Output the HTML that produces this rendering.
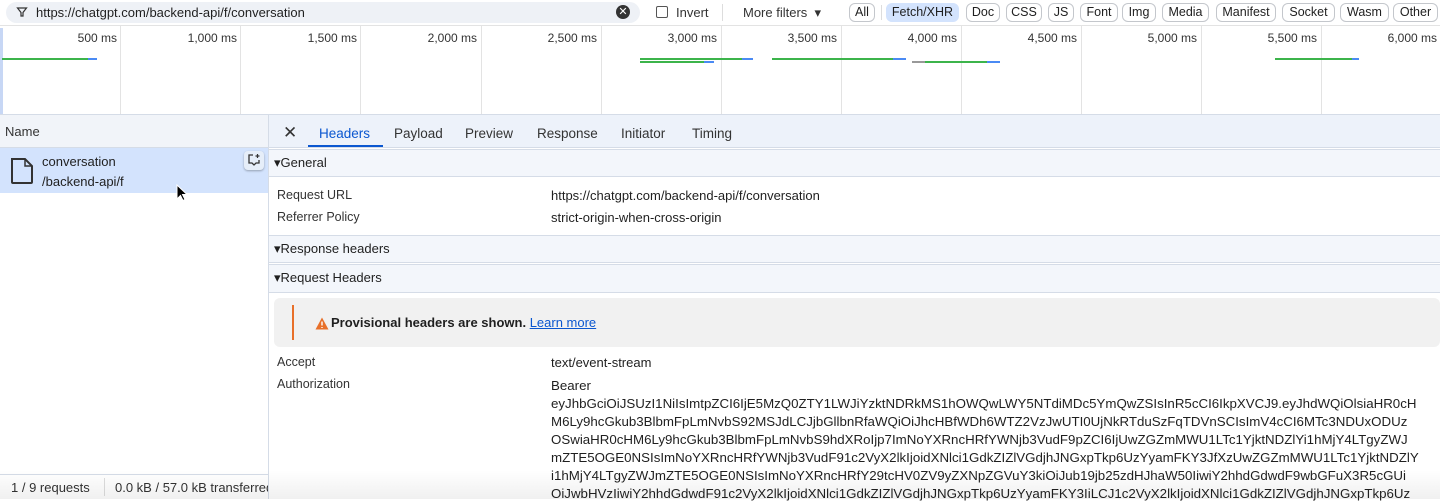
<!DOCTYPE html>
<html><head><meta charset="utf-8"><style>
*{margin:0;padding:0;box-sizing:border-box}
body{width:1440px;height:499px;overflow:hidden;background:#fff;font-family:"Liberation Sans",Arial,sans-serif;color:#1f1f1f;position:relative;font-size:13px}
.a{position:absolute;white-space:nowrap}
.chip{position:absolute;top:3px;height:19px;border:1px solid #c4c7cc;border-radius:6px;font-size:12.5px;line-height:17px;text-align:center;color:#1f1f1f}
.vl{position:absolute;top:26px;width:1px;height:88px;background:#e3e3e3}
.tl{position:absolute;top:31px;font-size:12px;color:#333;text-align:right;width:80px}
.bar{position:absolute;height:2px}
.sec{position:absolute;left:269px;width:1171px;background:#f3f6fb;border-top:1px solid #d5dce7;border-bottom:1px solid #d5dce7;font-size:13px;line-height:26px;padding-left:5px}
.k{position:absolute;left:277px;font-size:12.5px;color:#333}
.v{position:absolute;left:551px;font-size:13px;color:#1f1f1f;white-space:nowrap;overflow:hidden;width:880px}
</style></head><body>
<div class="a" style="left:6px;top:2px;width:634px;height:21px;background:#eef1f6;border-radius:11px"></div>
<svg class="a" style="left:16px;top:6px" width="12" height="12" viewBox="0 0 12 12"><path d="M1.5 2h9L7 6.5V10l-2 0V6.5z" fill="none" stroke="#333" stroke-width="1.2"/></svg>
<div class="a" style="left:36px;top:5px;font-size:13px">https://chatgpt.com/backend-api/f/conversation</div>
<div class="a" style="left:616px;top:5px;width:14px;height:14px;border-radius:7px;background:#333;color:#fff;font-size:11px;line-height:14px;text-align:center">✕</div>
<div class="a" style="left:656px;top:6px;width:12px;height:12px;border:1px solid #555;border-radius:2px"></div>
<div class="a" style="left:676px;top:5px;font-size:13px;color:#333">Invert</div>
<div class="a" style="left:722px;top:4px;width:1px;height:17px;background:#ddd"></div>
<div class="a" style="left:743px;top:5px;font-size:13px;color:#333">More filters &nbsp;▾</div>
<div class="a" style="left:881px;top:5px;width:1px;height:15px;background:#ddd"></div>
<div class="chip" style="left:849px;width:26px">All</div>
<div class="chip" style="left:886px;width:73px;background:#d3e3fd;border-color:#d3e3fd">Fetch/XHR</div>
<div class="chip" style="left:966px;width:34px">Doc</div>
<div class="chip" style="left:1006px;width:36px">CSS</div>
<div class="chip" style="left:1048px;width:26px">JS</div>
<div class="chip" style="left:1080px;width:38px">Font</div>
<div class="chip" style="left:1122px;width:34px">Img</div>
<div class="chip" style="left:1162px;width:47px">Media</div>
<div class="chip" style="left:1216px;width:60px">Manifest</div>
<div class="chip" style="left:1282px;width:53px">Socket</div>
<div class="chip" style="left:1340px;width:49px">Wasm</div>
<div class="chip" style="left:1393px;width:45px">Other</div>
<div class="a" style="left:0;top:25px;width:1440px;height:1px;background:#e3e3e3"></div>
<div class="a" style="left:0;top:28px;width:3px;height:86px;background:#c7d7f5"></div>
<div class="vl" style="left:120px"></div><div class="vl" style="left:240px"></div><div class="vl" style="left:360px"></div><div class="vl" style="left:481px"></div><div class="vl" style="left:601px"></div><div class="vl" style="left:721px"></div><div class="vl" style="left:841px"></div><div class="vl" style="left:961px"></div><div class="vl" style="left:1081px"></div><div class="vl" style="left:1201px"></div><div class="vl" style="left:1321px"></div>
<div class="tl" style="left:37px">500 ms</div><div class="tl" style="left:157px">1,000 ms</div><div class="tl" style="left:277px">1,500 ms</div><div class="tl" style="left:397px">2,000 ms</div><div class="tl" style="left:517px">2,500 ms</div><div class="tl" style="left:637px">3,000 ms</div><div class="tl" style="left:757px">3,500 ms</div><div class="tl" style="left:877px">4,000 ms</div><div class="tl" style="left:997px">4,500 ms</div><div class="tl" style="left:1117px">5,000 ms</div><div class="tl" style="left:1237px">5,500 ms</div><div class="tl" style="left:1357px">6,000 ms</div>
<div class="bar" style="left:2px;top:58px;width:86px;background:#3cb44b"></div><div class="bar" style="left:88px;top:58px;width:9px;background:#4a8af4"></div>
<div class="bar" style="left:640px;top:58px;width:102px;background:#3cb44b"></div><div class="bar" style="left:742px;top:58px;width:11px;background:#4a8af4"></div>
<div class="bar" style="left:640px;top:61px;width:64px;background:#3cb44b"></div><div class="bar" style="left:704px;top:61px;width:10px;background:#4a8af4"></div>
<div class="bar" style="left:772px;top:58px;width:121px;background:#3cb44b"></div><div class="bar" style="left:893px;top:58px;width:13px;background:#4a8af4"></div>
<div class="bar" style="left:912px;top:61px;width:13px;background:#999"></div><div class="bar" style="left:925px;top:61px;width:62px;background:#3cb44b"></div><div class="bar" style="left:987px;top:61px;width:13px;background:#4a8af4"></div>
<div class="bar" style="left:1275px;top:58px;width:77px;background:#3cb44b"></div><div class="bar" style="left:1352px;top:58px;width:7px;background:#4a8af4"></div>
<div class="a" style="left:0;top:114px;width:1440px;height:1px;background:#d5dce7"></div>
<div class="a" style="left:0;top:115px;width:268px;height:33px;background:#f1f4f9;border-bottom:1px solid #d5dce7"></div>
<div class="a" style="left:5px;top:124px;font-size:13px;color:#333">Name</div>
<div class="a" style="left:0;top:148px;width:268px;height:45px;background:#d3e3fd"></div>
<svg class="a" style="left:9px;top:157px" width="26" height="28" viewBox="0 0 26 28"><path d="M3 2h13l7 7v16a1 1 0 0 1-1 1H4a1 1 0 0 1-1-1z" fill="none" stroke="#333" stroke-width="2"/><path d="M16 2v7h7" fill="none" stroke="#333" stroke-width="1.5"/></svg>
<div class="a" style="left:42px;top:154px;font-size:13px">conversation</div>
<div class="a" style="left:42px;top:174px;font-size:13px">/backend-api/f</div>
<div class="a" style="left:244px;top:151px;width:20px;height:19px;background:#e6eef9;border-radius:4px;box-shadow:0 1px 2px rgba(0,0,0,.3)"></div>
<svg class="a" style="left:247px;top:153px" width="14" height="14" viewBox="0 0 14 14"><path d="M6 2H2v8h3l2 2 2-2h3V7" fill="none" stroke="#333" stroke-width="1.3"/><path d="M10.5 1v4M8.5 3h4" stroke="#333" stroke-width="1.2"/></svg>
<svg class="a" style="left:176px;top:184px" width="12" height="18" viewBox="0 0 12 18"><path d="M1 1v14l3.5-3.5 2.5 5 2-1-2.5-5H11z" fill="#000" stroke="#fff" stroke-width="1"/></svg>
<div class="a" style="left:268px;top:115px;width:1px;height:384px;background:#d5dce7"></div>
<div class="a" style="left:0;top:474px;width:268px;height:1px;background:#d5dce7"></div>
<div class="a" style="left:11px;top:480px;font-size:13px;color:#333">1 / 9 requests</div>
<div class="a" style="left:104px;top:478px;width:1px;height:18px;background:#ddd"></div>
<div class="a" style="left:115px;top:480px;font-size:13px;color:#333;width:153px;overflow:hidden">0.0 kB / 57.0 kB transferred</div>
<div class="a" style="left:269px;top:115px;width:1171px;height:33px;background:#edf2fa;border-bottom:1px solid #d5dce7"></div>
<div class="a" style="left:283px;top:123px;font-size:17px;color:#333">✕</div>
<div class="a" style="left:319px;top:126px;font-size:13.5px;color:#0b57d0">Headers</div>
<div class="a" style="left:308px;top:145px;width:75px;height:2px;background:#0b57d0"></div>
<div class="a" style="left:394px;top:126px;font-size:13.5px;color:#333">Payload</div>
<div class="a" style="left:465px;top:126px;font-size:13.5px;color:#333">Preview</div>
<div class="a" style="left:537px;top:126px;font-size:13.5px;color:#333">Response</div>
<div class="a" style="left:621px;top:126px;font-size:13.5px;color:#333">Initiator</div>
<div class="a" style="left:692px;top:126px;font-size:13.5px;color:#333">Timing</div>
<div class="sec" style="top:149px;height:28px">▾General</div>
<div class="k" style="top:188px">Request URL</div><div class="v" style="top:188px">https://chatgpt.com/backend-api/f/conversation</div>
<div class="k" style="top:210px">Referrer Policy</div><div class="v" style="top:210px">strict-origin-when-cross-origin</div>
<div class="sec" style="top:235px;height:28px">▾Response headers</div>
<div class="sec" style="top:264px;height:29px">▾Request Headers</div>
<div class="a" style="left:274px;top:298px;width:1166px;height:49px;background:#f1f1f1;border-radius:6px"></div>
<div class="a" style="left:292px;top:305px;width:2px;height:35px;background:#e8702a"></div>
<svg class="a" style="left:315px;top:317px" width="14" height="13" viewBox="0 0 14 13"><path d="M7 0.5L13.5 12.5H0.5z" fill="#e8702a"/><path d="M7 4.5v4M7 10v1" stroke="#fff" stroke-width="1.4"/></svg>
<div class="a" style="left:331px;top:315px;font-size:13px;font-weight:bold">Provisional headers are shown. <span style="font-weight:normal;color:#0b57d0;text-decoration:underline">Learn more</span></div>
<div class="k" style="top:355px">Accept</div><div class="v" style="top:355px">text/event-stream</div>
<div class="k" style="top:377px">Authorization</div>
<div class="v" style="top:377px;line-height:18px;font-size:13.3px">Bearer<br>eyJhbGciOiJSUzI1NiIsImtpZCI6IjE5MzQ0ZTY1LWJiYzktNDRkMS1hOWQwLWY5NTdiMDc5YmQwZSIsInR5cCI6IkpXVCJ9.eyJhdWQiOlsiaHR0cH<br>M6Ly9hcGkub3BlbmFpLmNvbS92MSJdLCJjbGllbnRfaWQiOiJhcHBfWDh6WTZ2VzJwUTI0UjNkRTduSzFqTDVnSCIsImV4cCI6MTc3NDUxODUz<br>OSwiaHR0cHM6Ly9hcGkub3BlbmFpLmNvbS9hdXRoIjp7ImNoYXRncHRfYWNjb3VudF9pZCI6IjUwZGZmMWU1LTc1YjktNDZlYi1hMjY4LTgyZWJ<br>mZTE5OGE0NSIsImNoYXRncHRfYWNjb3VudF91c2VyX2lkIjoidXNlci1GdkZIZlVGdjhJNGxpTkp6UzYyamFKY3JfXzUwZGZmMWU1LTc1YjktNDZlY<br>i1hMjY4LTgyZWJmZTE5OGE0NSIsImNoYXRncHRfY29tcHV0ZV9yZXNpZGVuY3kiOiJub19jb25zdHJhaW50IiwiY2hhdGdwdF9wbGFuX3R5cGUi<br>OiJwbHVzIiwiY2hhdGdwdF91c2VyX2lkIjoidXNlci1GdkZIZlVGdjhJNGxpTkp6UzYyamFKY3IiLCJ1c2VyX2lkIjoidXNlci1GdkZIZlVGdjhJNGxpTkp6Uz</div>
<div class="a" style="left:0;top:470px;width:1440px;height:29px;background:linear-gradient(rgba(0,0,0,0),rgba(0,0,0,.06))"></div>
</body></html>
